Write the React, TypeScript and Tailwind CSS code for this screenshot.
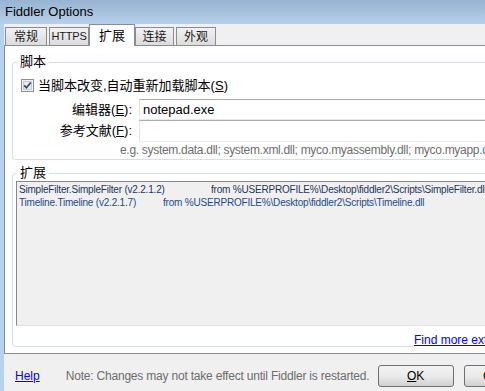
import React from 'react';

const ui = "font-['Liberation_Sans','Noto_Sans_CJK_SC',sans-serif]";

const Tab = ({ label, w, ml = '', active = false, small = false }: { label: string; w: string; ml?: string; active?: boolean; small?: boolean }) =>
  active ? (
    <div
      className={`${w} ${ml} relative z-10 -mb-px h-[22px] border border-b-0 border-[#898c95] bg-white flex items-center justify-center text-[13px] text-black`}
    >
      {label}
    </div>
  ) : (
    <div
      className={`${w} ${ml} h-[18px] border border-b-0 border-[#898c95] bg-gradient-to-b from-[#f2f2f2] to-[#dcdcdc] flex items-center justify-center ${small ? 'text-[11px] tracking-[-0.2px]' : 'text-[12px]'} text-[#1a1a1a]`}
    >
      {label}
    </div>
  );

const CheckBox = () => (
  <svg width="13" height="13" viewBox="0 0 13 13" className="shrink-0">
    <rect x="0.5" y="0.5" width="12" height="12" fill="#f4f4f4" stroke="#8e8f8f" />
    <rect x="2.5" y="2.5" width="8" height="8" fill="#e8eaec" stroke="#c6c9cf" />
    <path d="M3.2 6.4 L5.4 8.8 L9.8 3.4" fill="none" stroke="#31437a" strokeWidth="1.6" />
  </svg>
);

const Button = ({ children, w }: { children: React.ReactNode; w: string }) => (
  <div
    className={`${w} h-[22px] shrink-0 rounded-[3px] border border-[#707070] bg-gradient-to-b from-[#f2f2f2] via-[#ebebeb] to-[#d0d0d0] flex items-center justify-center text-[12px] text-black`}
  >
    {children}
  </div>
);

export default function App() {
  return (
    <div className={`w-[485px] h-[391px] overflow-hidden bg-[#f0f0f0] flex flex-col ${ui}`}>
      {/* Title bar */}
      <div className="h-[24px] shrink-0 bg-gradient-to-b from-[#97b3d1] to-[#b8d0ea] flex items-center pl-[5px] text-[13px] text-black">
        Fiddler Options
      </div>

      <div className="flex flex-1">
        <div className="w-[4px] shrink-0 bg-[#b9d1ea]" />

        <div className="flex flex-col w-[540px] shrink-0">
          {/* Tabs */}
          <div className="h-[21px] flex items-end">
            <Tab label="常规" w="w-[42px]" ml="ml-[1px]" />
            <Tab label="HTTPS" w="w-[40px]" ml="ml-[2px]" small />
            <Tab label="扩展" w="w-[46px]" active />
            <Tab label="连接" w="w-[39px]" />
            <Tab label="外观" w="w-[40px]" ml="ml-[2px]" />
          </div>

          {/* Panel */}
          <div className="h-[309px] border border-[#898c95] bg-white pl-[7px]">
            {/* Script group */}
            <div className="relative mt-[16px] h-[98px] rounded-[3px] border border-[#d5dfe5]">
              <span className="absolute left-[4px] -top-[9px] bg-white px-[3px] text-[13px] leading-[16px] text-black">
                脚本
              </span>
              <div className="flex items-center gap-[4px] ml-[8px] mt-[16px] h-[13px] text-[13px] text-black">
                <CheckBox />
                <span>
                  当脚本改变,自动重新加载脚本(<span className="underline">S</span>)
                </span>
              </div>
              <div className="flex items-center mt-[7px] h-[21px]">
                <div className="w-[119px] text-right text-[13px] text-black">
                  编辑器(<span className="underline">E</span>):
                </div>
                <div className="ml-[7px] flex-1 h-[21px] border border-[#abadb3] border-b-[#e3e9ef] border-x-[#e2e3ea] flex items-center pl-[3px] text-[13px] text-black">
                  notepad.exe
                </div>
              </div>
              <div className="flex items-center h-[22px]">
                <div className="w-[119px] text-right text-[13px] text-black">
                  参考文献(<span className="underline">F</span>):
                </div>
                <div className="ml-[7px] flex-1 h-[22px] border border-[#abadb3] border-b-[#e3e9ef] border-x-[#e2e3ea]" />
              </div>
              <div className="ml-[107px] mt-[1px] text-[12px] leading-[14px] tracking-[-0.3px] text-[#6d6d6d] whitespace-nowrap">
                e.g. system.data.dll; system.xml.dll; myco.myassembly.dll; myco.myapp.dll
              </div>
            </div>

            {/* Extensions group */}
            <div className="relative mt-[13px] h-[174px] rounded-[3px] border border-[#d5dfe5]">
              <span className="absolute left-[4px] -top-[9px] bg-white px-[3px] text-[13px] leading-[16px] text-black">
                扩展
              </span>
              <div className="ml-[3px] mt-[7px] h-[145px] border border-[#828790] border-b-[#e3e3e3] border-r-[#e3e3e3] bg-[#f0f0f0] pt-[1px] pl-[2px] text-[10px] leading-[13px] tracking-[-0.2px] whitespace-nowrap">
                <div className="flex text-[#23355a]">
                  <span className="w-[192px]">SimpleFilter.SimpleFilter (v2.2.1.2)</span>
                  <span>from %USERPROFILE%\Desktop\fiddler2\Scripts\SimpleFilter.dll</span>
                </div>
                <div className="flex text-[#1d4a8a]">
                  <span className="w-[144px]">Timeline.Timeline (v2.2.1.7)</span>
                  <span>from %USERPROFILE%\Desktop\fiddler2\Scripts\Timeline.dll</span>
                </div>
              </div>
              <a className="absolute left-[400px] -bottom-[3px] bg-white px-[1px] h-[18px] flex items-center text-[12px] text-[#0000ff] underline whitespace-nowrap">
                Find more extensions...
              </a>
            </div>
          </div>

          {/* Footer */}
          <div className="flex items-center h-[22px] mt-[11px] pl-[11px] text-[12px]">
            <a className="text-[#0000ff] underline">Help</a>
            <span className="ml-[26px] w-[312px] text-[#6d6d6d] tracking-[-0.2px] whitespace-nowrap">
              Note: Changes may not take effect until Fiddler is restarted.
            </span>
            <Button w="w-[76px]">
              <span className="underline">O</span>K
            </Button>
            <div className="ml-[10px]">
              <Button w="w-[76px]">Cancel</Button>
            </div>
          </div>
        </div>
      </div>
    </div>
  );
}
